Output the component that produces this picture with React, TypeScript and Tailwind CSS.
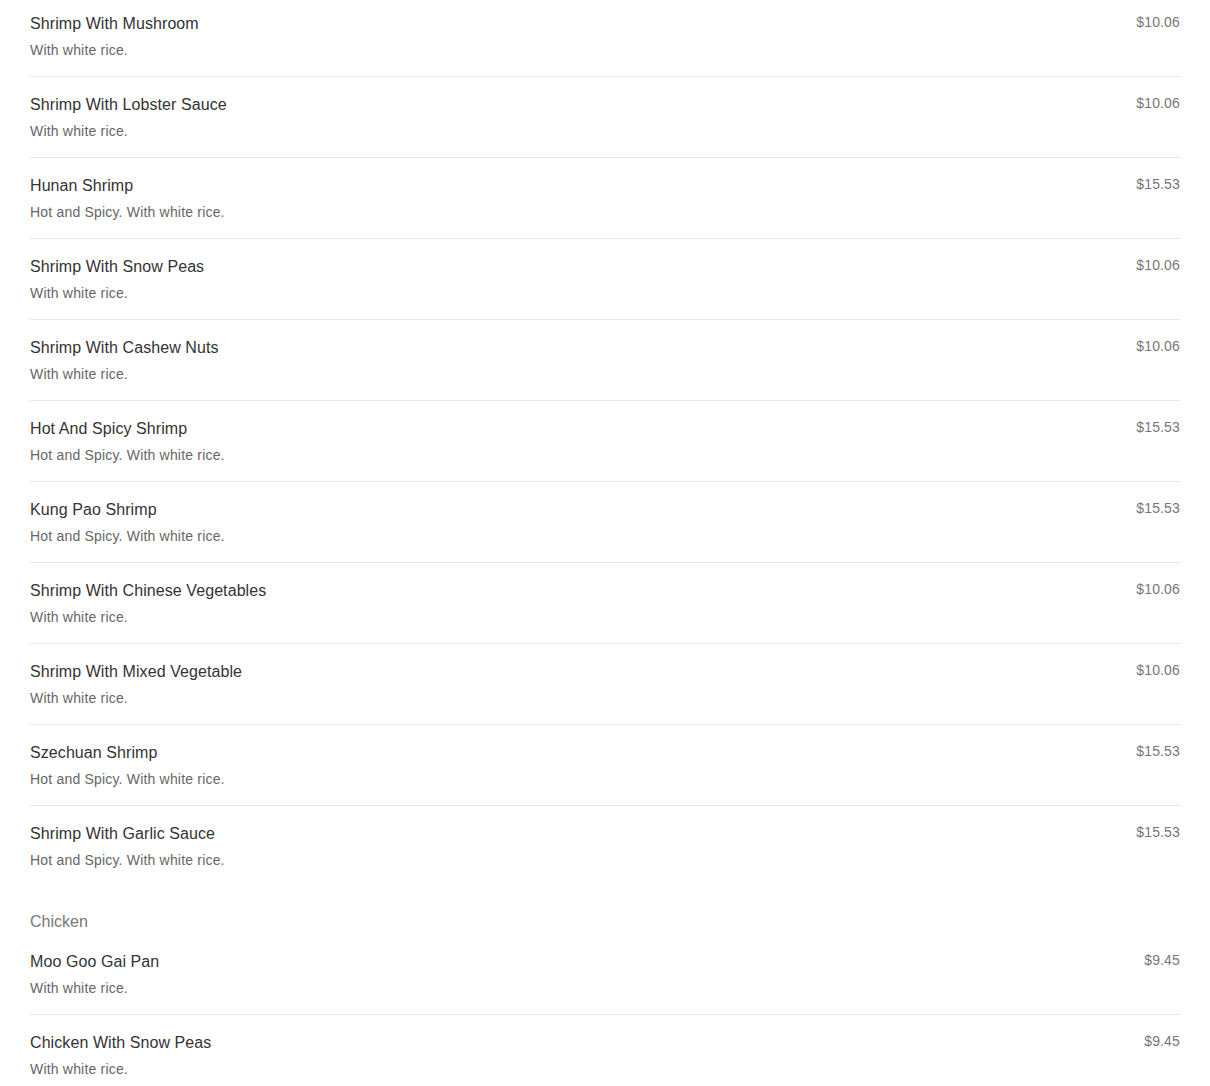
type Item = { name: string; desc: string; price: string };

const SPICY = 'Hot and Spicy. With white rice.';
const RICE = 'With white rice.';

const shrimp: Item[] = [
  { name: 'Shrimp With Mushroom', desc: RICE, price: '$10.06' },
  { name: 'Shrimp With Lobster Sauce', desc: RICE, price: '$10.06' },
  { name: 'Hunan Shrimp', desc: SPICY, price: '$15.53' },
  { name: 'Shrimp With Snow Peas', desc: RICE, price: '$10.06' },
  { name: 'Shrimp With Cashew Nuts', desc: RICE, price: '$10.06' },
  { name: 'Hot And Spicy Shrimp', desc: SPICY, price: '$15.53' },
  { name: 'Kung Pao Shrimp', desc: SPICY, price: '$15.53' },
  { name: 'Shrimp With Chinese Vegetables', desc: RICE, price: '$10.06' },
  { name: 'Shrimp With Mixed Vegetable', desc: RICE, price: '$10.06' },
  { name: 'Szechuan Shrimp', desc: SPICY, price: '$15.53' },
  { name: 'Shrimp With Garlic Sauce', desc: SPICY, price: '$15.53' },
];

const chicken: Item[] = [
  { name: 'Moo Goo Gai Pan', desc: RICE, price: '$9.45' },
  { name: 'Chicken With Snow Peas', desc: RICE, price: '$9.45' },
];

function Fila({ item, primera, arriba }: { item: Item; primera?: boolean; arriba?: boolean }) {
  return (
    <li
      className={`flex items-start justify-between pb-4 ${
        primera ? (arriba ? 'pt-[14px]' : 'pt-[18px]') : 'border-t border-[#e6e6e6] pt-[18px]'
      }`}
    >
      <div>
        <div className="text-base leading-5 tracking-[0.08px] text-[#333]">{item.name}</div>
        <div className="mt-[6px] text-sm leading-5 tracking-[0.19px] text-[#666]">{item.desc}</div>
      </div>
      <div className="-mt-[2px] text-sm leading-5 tracking-[0.15px] text-[#777]">{item.price}</div>
    </li>
  );
}

export default function App() {
  return (
    <div className="h-[1086px] overflow-hidden bg-white px-[30px] font-['Liberation_Sans',Arial,sans-serif]">
      {/* Camarones */}
      <ul>
        {shrimp.map((it, i) => (
          <Fila key={it.name} item={it} primera={i === 0} arriba />
        ))}
      </ul>

      {/* Pollo */}
      <h2 className="mt-[26px] mb-[2px] text-base leading-5 text-[#777]">Chicken</h2>
      <ul>
        {chicken.map((it, i) => (
          <Fila key={it.name} item={it} primera={i === 0} />
        ))}
      </ul>
    </div>
  );
}
